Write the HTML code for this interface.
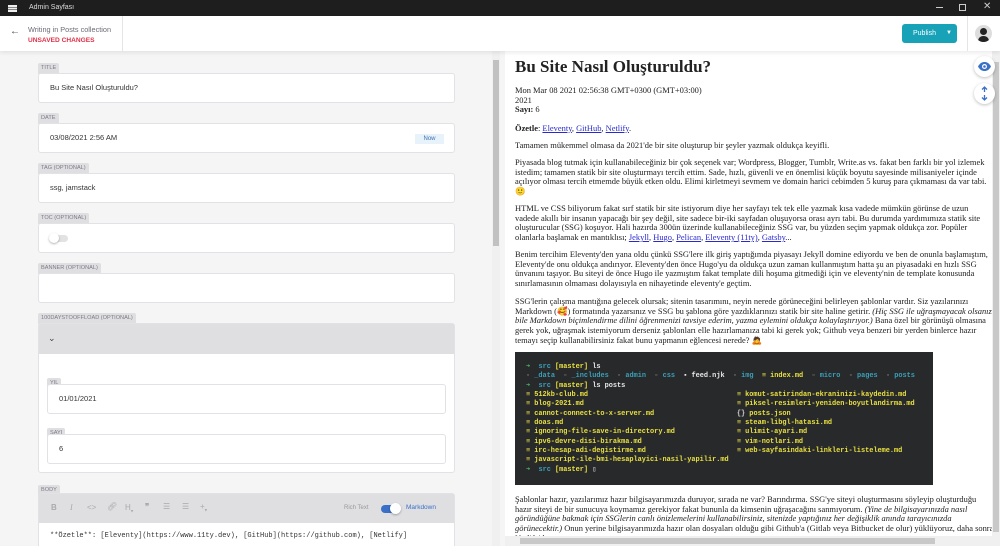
<!DOCTYPE html>
<html><head><meta charset="utf-8"><style>
*{box-sizing:border-box;margin:0;padding:0}
html,body{width:1000px;height:546px;overflow:hidden}
body{background:#f5f5f5;font-family:"Liberation Sans",sans-serif;position:relative}
.a{position:absolute}
.top{left:0;top:0;width:1000px;height:16px;background:#1e1e1e;color:#ddd;font-size:7px}
.hdr{left:0;top:16px;width:1000px;height:35px;background:#fff;box-shadow:0 2px 4px rgba(0,0,0,.08);z-index:2}
.lbl{position:absolute;left:38px;height:11px;padding:0 3px;background:#dfdfe2;color:#7b7b86;font-size:5.6px;line-height:11px;border-radius:2px 2px 0 0}
.card{position:absolute;left:38px;width:417px;height:30px;background:#fff;border:1px solid #e2e2e6;border-radius:3px;font-size:7.5px;color:#333;padding:0 11px;line-height:28px}
.pv{left:505px;top:51px;width:487px;height:485px;background:#fff;font-family:"Liberation Serif",serif;font-size:8.45px;line-height:9.7px;color:#222;white-space:nowrap;overflow:hidden}
.pv p{position:absolute;left:10px}
.pv a{color:#2a2acc;text-decoration:underline}
.term{position:absolute;left:10px;top:301px;width:418px;height:133px;background:#28292b;font-family:"Liberation Mono",monospace;font-size:6.9px;line-height:9.35px;color:#e8e8e8;padding:11px 0 0 11px;white-space:pre;font-weight:bold}
.y{color:#e8e040}.c{color:#3aa0b8}.g{color:#4cc06a}.gr{color:#888}
.tb{position:absolute;top:0;line-height:normal;font-size:8px;color:#aaa}
</style></head><body>
<div class="a top">
 <div class="a" style="left:8px;top:5px;width:9px;height:1.5px;background:#eee;box-shadow:0 2.5px 0 #eee,0 5px 0 #eee"></div>
 <div class="a" style="left:29px;top:4px">Admin Sayfası</div>
 <div class="a" style="left:936px;top:7px;width:7px;height:1px;background:#ccc"></div>
 <div class="a" style="left:959px;top:4px;width:7px;height:7px;border:1px solid #ccc"></div>
 <div class="a" style="left:983px;top:1px;font-size:10px;color:#ccc">✕</div>
</div>
<div class="a hdr">
 <div class="a" style="left:10px;top:10px;font-size:10px;color:#444">←</div>
 <div class="a" style="left:28px;top:9px;font-size:7.3px;color:#6b6b75">Writing in Posts collection</div>
 <div class="a" style="left:28px;top:21px;font-size:6.6px;color:#e0304a;font-weight:bold">UNSAVED CHANGES</div>
 <div class="a" style="left:122px;top:0;width:1px;height:35px;background:#e5e5e5"></div>
 <div class="a" style="left:902px;top:8px;width:55px;height:19px;background:#17a2b8;border-radius:3px;color:#fff;font-size:7px;line-height:19px;padding-left:11px">Publish<span style="position:absolute;left:44px;top:0;font-size:6px">▼</span></div>
 <div class="a" style="left:967px;top:0;width:1px;height:35px;background:#e5e5e5"></div>
 <div class="a" style="left:975px;top:9px;width:17px;height:17px;border-radius:50%;background:#ddd;overflow:hidden"><div class="a" style="left:5px;top:3px;width:7px;height:7px;border-radius:50%;background:#222"></div><div class="a" style="left:3px;top:11px;width:11px;height:8px;border-radius:5px 5px 0 0;background:#222"></div></div>
</div>
<div class="a" style="left:492px;top:51px;width:8px;height:495px;background:#f0f0f0"></div>
<div class="a" style="left:493px;top:60px;width:6px;height:186px;background:#c1c1c1"></div>

<div class="lbl" style="top:63px">TITLE</div><div class="card" style="top:73px">Bu Site Nasıl Oluşturuldu?</div>
<div class="lbl" style="top:113px">DATE</div><div class="card" style="top:123px">03/08/2021 2:56 AM<span style="position:absolute;right:10px;top:10px;height:10px;width:29px;background:#e8f2fa;color:#3a70b0;font-size:6px;line-height:10px;text-align:center">Now</span></div>
<div class="lbl" style="top:163px">TAG (OPTIONAL)</div><div class="card" style="top:173px">ssg, jamstack</div>
<div class="lbl" style="top:213px">TOC (OPTIONAL)</div><div class="card" style="top:223px"><div class="a" style="left:11px;top:11px;width:18px;height:7px;border-radius:4px;background:#e2e2e2"></div><div class="a" style="left:10px;top:9px;width:10px;height:10px;border-radius:50%;background:#fff;box-shadow:0 1px 2px rgba(0,0,0,.3)"></div></div>
<div class="lbl" style="top:263px">BANNER (OPTIONAL)</div><div class="card" style="top:273px"></div>
<div class="lbl" style="top:313px">100DAYSTOOFFLOAD (OPTIONAL)</div>
<div class="card" style="top:323px;height:150px;padding:0">
 <div class="a" style="left:0;top:0;width:415px;height:30px;background:#dfdfe2;font-size:9px;color:#444;padding-left:9px;line-height:28px">⌄</div>
 <div class="lbl" style="left:8px;top:54px">YIL</div>
 <div class="card" style="left:8px;top:60px;width:399px;height:30px">01/01/2021</div>
 <div class="lbl" style="left:8px;top:104px">SAYI</div>
 <div class="card" style="left:8px;top:110px;width:399px;height:30px">6</div>
</div>
<div class="lbl" style="top:485px">BODY</div>
<div class="card" style="top:493px;height:53px;padding:0;border-bottom:none;border-radius:3px 3px 0 0">
 <div class="a" style="left:0;top:0;width:415px;height:29px;background:#dfdfe2"></div>
 <span class="tb" style="left:12px;top:9px;font-weight:bold">B</span>
 <span class="tb" style="left:31px;top:9px;font-style:italic;font-family:'Liberation Serif',serif">I</span>
 <span class="tb" style="left:48px;top:9px">&lt;&gt;</span>
 <span class="tb" style="left:68px;top:8px">🔗︎</span>
 <span class="tb" style="left:86px;top:9px">H<sub style="font-size:5px">▾</sub></span>
 <span class="tb" style="left:106px;top:8px;font-weight:bold">❞</span>
 <span class="tb" style="left:124px;top:8px">☰</span>
 <span class="tb" style="left:143px;top:8px">☰</span>
 <span class="tb" style="left:161px;top:8px">+<sub style="font-size:5px">▾</sub></span>
 <div class="a" style="left:305px;top:11px;font-size:6px;color:#999;line-height:normal">Rich Text</div>
 <div class="a" style="left:342px;top:11px;width:18px;height:8px;border-radius:4px;background:#3a70c8"></div>
 <div class="a" style="left:351px;top:9px;width:11px;height:11px;border-radius:50%;background:#fff;box-shadow:0 1px 2px rgba(0,0,0,.3)"></div>
 <div class="a" style="left:367px;top:10px;font-size:6.5px;color:#3a70c8;line-height:normal">Markdown</div>
 <div class="a" style="left:11px;top:38px;font-family:'Liberation Mono',monospace;font-size:7px;color:#333;white-space:nowrap;line-height:normal">**Özetle**: [Eleventy](https://www.11ty.dev), [GitHub](https://github.com), [Netlify]</div>
</div>

<div class="a pv">
 <p style="top:6px;font-size:17px;font-weight:bold;line-height:20px">Bu Site Nasıl Oluşturuldu?</p>
 <p style="top:35px">Mon Mar 08 2021 02:56:38 GMT+0300 (GMT+03:00)<br>2021<br><b>Sayı:</b> 6</p>
 <p style="top:73px"><b>Özetle</b>: <a>Eleventy</a>, <a>GitHub</a>, <a>Netlify</a>.</p>
 <p style="top:90px">Tamamen mükemmel olmasa da 2021'de bir site oluşturup bir şeyler yazmak oldukça keyifli.</p>
 <p style="top:107px">Piyasada blog tutmak için kullanabileceğiniz bir çok seçenek var; Wordpress, Blogger, Tumblr, Write.as vs. fakat ben farklı bir yol izlemek<br>istedim; tamamen statik bir site oluşturmayı tercih ettim. Sade, hızlı, güvenli ve en önemlisi küçük boyutu sayesinde milisaniyeler içinde<br>açılıyor olması tercih etmemde büyük etken oldu. Elimi kirletmeyi sevmem ve domain harici cebimden 5 kuruş para çıkmaması da var tabi.<br>🙂</p>
 <p style="top:153px">HTML ve CSS biliyorum fakat sırf statik bir site istiyorum diye her sayfayı tek tek elle yazmak kısa vadede mümkün görünse de uzun<br>vadede akıllı bir insanın yapacağı bir şey değil, site sadece bir-iki sayfadan oluşuyorsa orası ayrı tabi. Bu durumda yardımımıza statik site<br>oluşturucular (SSG) koşuyor. Hali hazırda 300ün üzerinde kullanabileceğiniz SSG var, bu yüzden seçim yapmak oldukça zor. Popüler<br>olanlarla başlamak en mantıklısı; <a>Jekyll</a>, <a>Hugo</a>, <a>Pelican</a>, <a>Eleventy (11ty)</a>, <a>Gatsby</a>...</p>
 <p style="top:199px">Benim tercihim Eleventy'den yana oldu çünkü SSG'lere ilk giriş yaptığımda piyasayı Jekyll domine ediyordu ve ben de onunla başlamıştım,<br>Eleventy'de onu oldukça andırıyor. Eleventy'den önce Hugo'yu da oldukça uzun zaman kullanmıştım hatta şu an piyasadaki en hızlı SSG<br>ünvanını taşıyor. Bu siteyi de önce Hugo ile yazmıştım fakat template dili hoşuma gitmediği için ve eleventy'nin de template konusunda<br>sınırlamasının olmaması dolayısıyla en nihayetinde eleventy'e geçtim.</p>
 <p style="top:246px">SSG'lerin çalışma mantığına gelecek olursak; sitenin tasarımını, neyin nerede görüneceğini belirleyen şablonlar vardır. Siz yazılarınızı<br>Markdown (🥰) formatında yazarsınız ve SSG bu şablona göre yazdıklarınızı statik bir site haline getirir. <i>(Hiç SSG ile uğraşmayacak olsanız<br>bile Markdown biçimlendirme dilini öğrenmenizi tavsiye ederim, yazma eylemini oldukça kolaylaştırıyor.)</i> Bana özel bir görünüşü olmasına<br>gerek yok, uğraşmak istemiyorum derseniz şablonları elle hazırlamanıza tabi ki gerek yok; Github veya benzeri bir yerden binlerce hazır<br>temayı seçip kullanabilirsiniz fakat bunu yapmanın eğlencesi nerede? 🙇</p>
 <div class="term"><span class="g">➜</span>  <span class="c">src</span> <span class="y">[master]</span> ls
<span class="gr">▫</span> <span class="c">_data</span>  <span class="gr">▫</span> <span class="c">_includes</span>  <span class="gr">▫</span> <span class="c">admin</span>  <span class="gr">▫</span> <span class="c">css</span>  ▪ feed.njk  <span class="gr">▫</span> <span class="c">img</span>  <span class="y">≡ index.md</span>  <span class="gr">▫</span> <span class="c">micro</span>  <span class="gr">▫</span> <span class="c">pages</span>  <span class="gr">▫</span> <span class="c">posts</span>
<span class="g">➜</span>  <span class="c">src</span> <span class="y">[master]</span> ls posts
<span class="y">≡ 512kb-club.md                                    ≡ komut-satirindan-ekraninizi-kaydedin.md
≡ blog-2021.md                                     ≡ piksel-resimleri-yeniden-boyutlandirma.md
≡ cannot-connect-to-x-server.md                    <span style="color:#ccc">{}</span> posts.json
≡ doas.md                                          ≡ steam-libgl-hatasi.md
≡ ignoring-file-save-in-directory.md               ≡ ulimit-ayari.md
≡ ipv6-devre-disi-birakma.md                       ≡ vim-notlari.md
≡ irc-hesap-adi-degistirme.md                      ≡ web-sayfasindaki-linkleri-listeleme.md
≡ javascript-ile-bmi-hesaplayici-nasil-yapilir.md</span>
<span class="g">➜</span>  <span class="c">src</span> <span class="y">[master]</span> ▯</div>
 <p style="top:444px">Şablonlar hazır, yazılarımız hazır bilgisayarımızda duruyor, sırada ne var? Barındırma. SSG'ye siteyi oluşturmasını söyleyip oluşturduğu<br>hazır siteyi de bir sunucuya koymamız gerekiyor fakat bununla da kimsenin uğraşacağını sanmıyorum. <i>(Yine de bilgisayarınızda nasıl<br>göründüğüne bakmak için SSGlerin canlı önizlemelerini kullanabilirsiniz, sitenizde yaptığınız her değişiklik anında tarayıcınızda<br>görünecektir.)</i> Onun yerine bilgisayarımızda hazır olan dosyaları olduğu gibi Github'a (Gitlab veya Bitbucket de olur) yüklüyoruz, daha sonra<br>Netlify'de ...</p>
</div>
<div class="a" style="left:992px;top:51px;width:8px;height:495px;background:#f0f0f0"></div>
<div class="a" style="left:993px;top:62px;width:6px;height:470px;background:#c8c8c8"></div>
<div class="a" style="left:505px;top:536px;width:487px;height:10px;background:#f0f0f0"></div>
<div class="a" style="left:520px;top:538px;width:415px;height:6px;background:#c8c8c8"></div>
<div class="a" style="left:974px;top:56px;width:21px;height:21px;border-radius:50%;background:#fff;box-shadow:0 1px 3px rgba(0,0,0,.25)"><svg width="21" height="21" viewBox="0 0 21 21"><path d="M4 10.5C6 7 8 6 10.5 6S15 7 17 10.5C15 14 13 15 10.5 15S6 14 4 10.5Z" fill="#3a70c8"/><circle cx="10.5" cy="10.5" r="2.5" fill="#fff"/><circle cx="10.5" cy="10.5" r="1.3" fill="#3a70c8"/></svg></div>
<div class="a" style="left:974px;top:83px;width:21px;height:21px;border-radius:50%;background:#fff;box-shadow:0 1px 3px rgba(0,0,0,.25)"><svg width="21" height="21" viewBox="0 0 21 21" fill="none" stroke="#3a70c8" stroke-width="1.3"><path d="M10.5 4V9M8 6.5L10.5 4L13 6.5M10.5 12V17M8 14.5L10.5 17L13 14.5"/></svg></div>
</body></html>
